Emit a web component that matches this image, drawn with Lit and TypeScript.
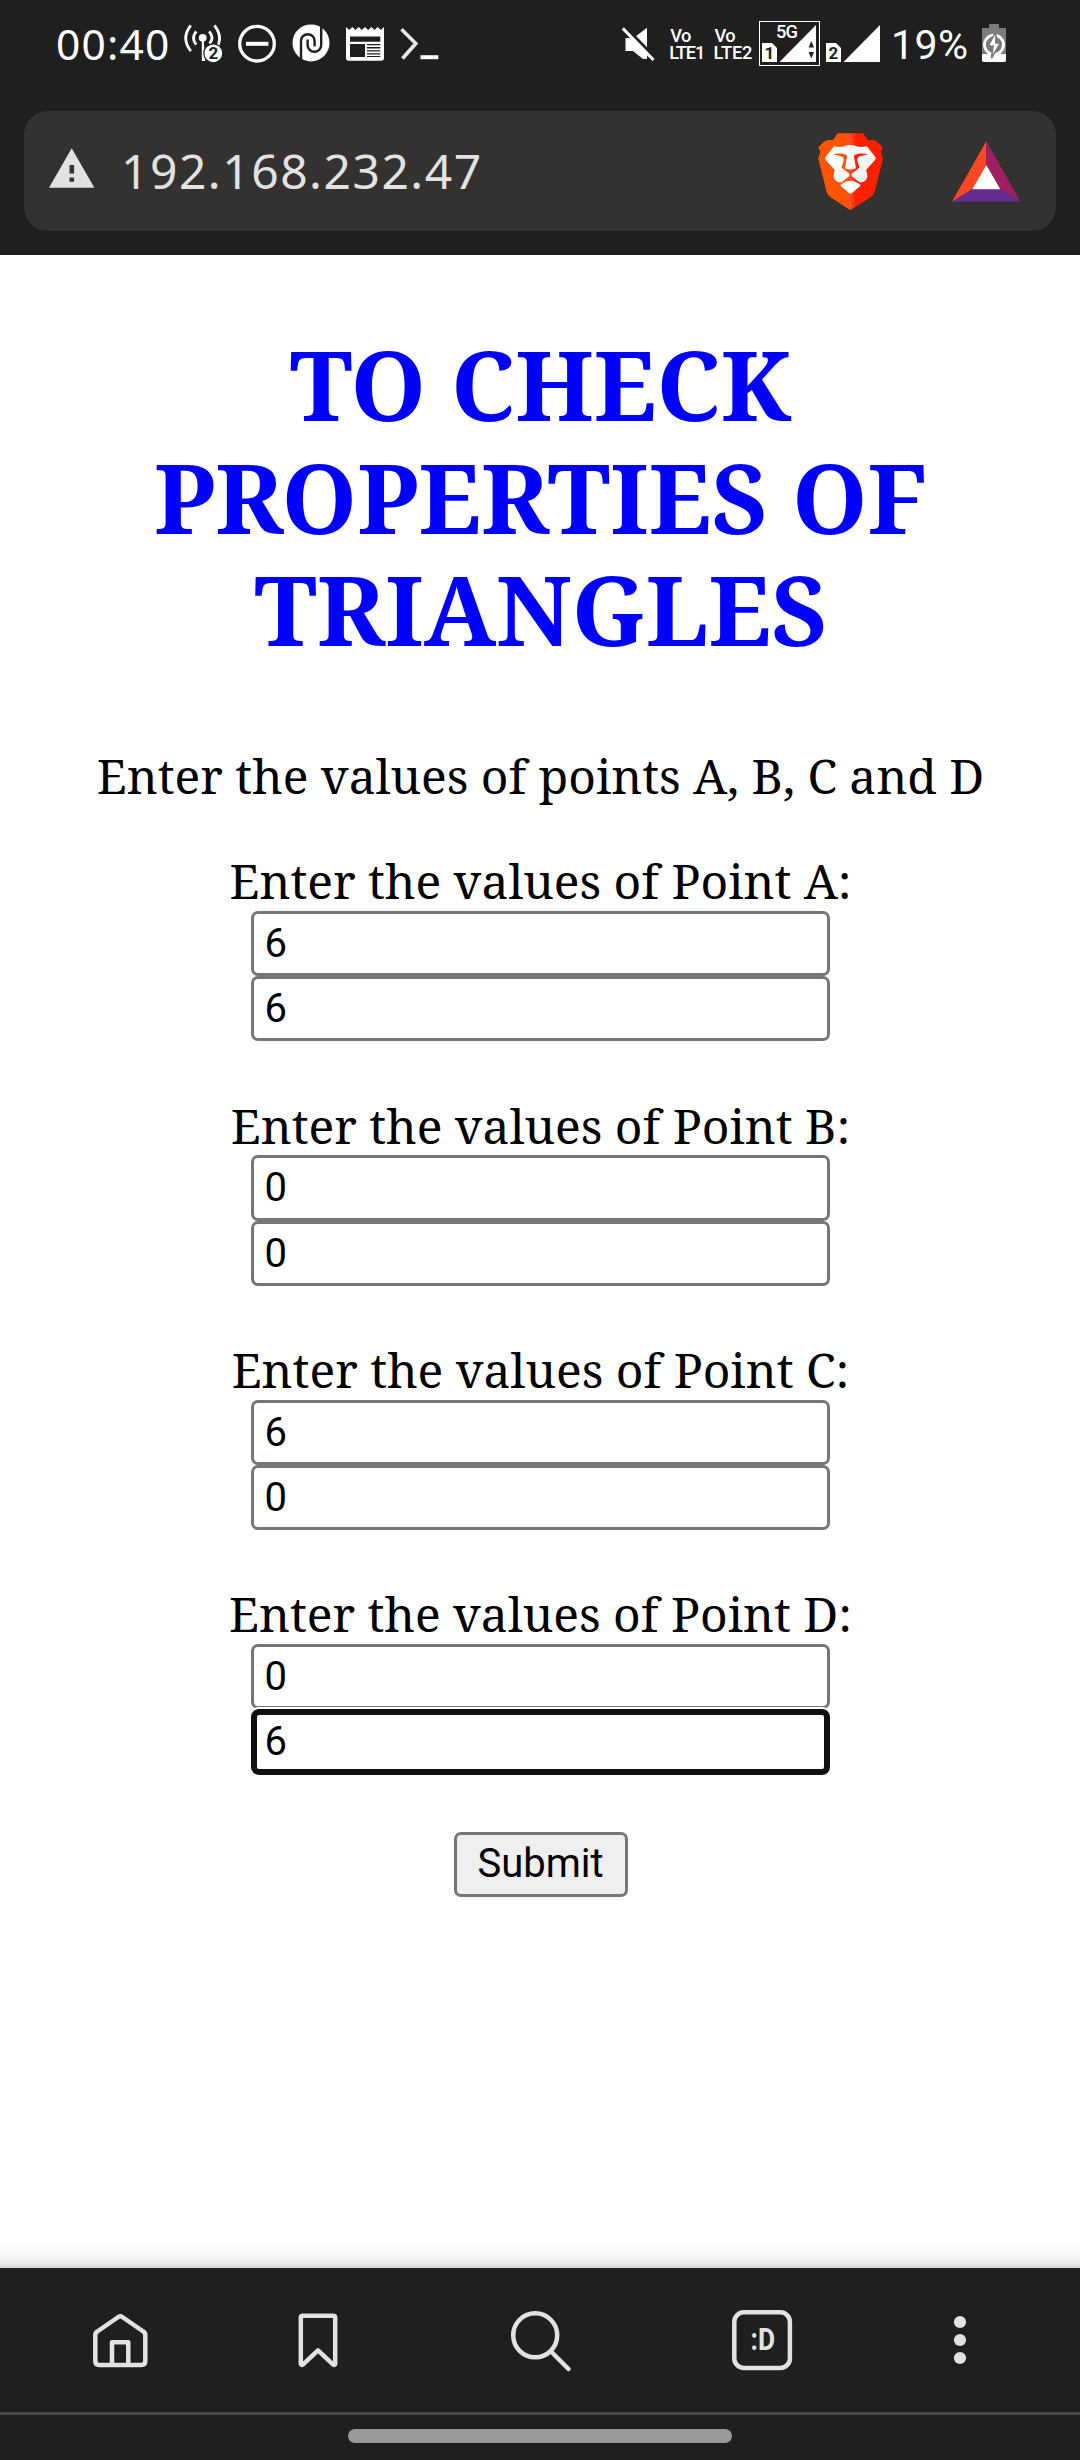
import { LitElement, html, css, svg } from "lit";
import { customElement, property } from "lit/decorators.js";
import { classMap } from "lit/directives/class-map.js";

@customElement("status-bar")
class StatusBar extends LitElement {
  static styles = css`
    :host { display: block; height: 87px; background: #1f1f1f; }
    .bar { display: flex; justify-content: space-between; height: 87px; padding: 0 72px 0 56px; }
    .side { display: flex; }
    .clock, .percent { color: #fff; font: 42px/87px "Noto Sans", sans-serif; white-space: nowrap; }
    .clock { width: 124px; font-size: 42.5px; letter-spacing: 1.2px; height: 87px; }
    .percent { font-family: Roboto, sans-serif; font-size: 41px; padding-top: 2px; width: 88px; letter-spacing: 0.5px; }
    svg { display: block; height: 87px; }
    .small { font: 500 18.3px Roboto, sans-serif; fill: #fff; }
    .sim { font: 700 17px Roboto, sans-serif; fill: #1f1f1f; }
  `;
  render() {
    return html`
      <div class="bar">
        <div class="side">
          <span class="clock">00:40</span>
          <svg width="264" viewBox="180 0 264 87" fill="none" stroke="#fff">
            <g stroke-width="2.8">
              <path d="M190.8 25.3Q180.6 38 190.8 51.2M214.4 25.3Q224.6 38 214.6 51" />
              <path d="M196.2 31.4Q190.8 38 196.2 44.6M209.2 31.4Q214.6 38 209.6 43.6" />
            </g>
            <circle cx="202.7" cy="37.8" r="3.9" fill="#fff" stroke="none" />
            <path d="M201.8 40h1.9l1.6 21h-3.5z" fill="#fff" stroke="none" />
            <circle cx="213.3" cy="53.3" r="9.5" fill="#fff" stroke="#1f1f1f" stroke-width="1.2" />
            <text class="sim" x="213.3" y="59.3" text-anchor="middle" stroke="none">2</text>
            <circle cx="257" cy="43.7" r="17.3" stroke-width="3.3" />
            <path d="M246 43.8h22.4" stroke-width="4" />
            <circle cx="311" cy="42.9" r="18.5" fill="#fff" stroke="none" />
            <path d="M301 62V41a6.8 6.8 0 0 1 13.6 0v5.5M321.2 24V45a6.8 6.8 0 0 1-13.6 0v-5.5" stroke="#1f1f1f" stroke-width="2.4" />
            <path d="M346 27l3.2 3 3.1-3 3.2 3 3.2-3 3.1 3 3.2-3 3.2 3 3.1-3 3.2 3 3.2-3 3.1 3 3.2-3v31a2.8 2.8 0 0 1-2.8 2.8H348.8a2.8 2.8 0 0 1-2.8-2.8z" fill="#fff" stroke="none" />
            <path d="M350 36.6h30.3v5.2H350zM350 44h15v13h-15zM367 44h13.3v1.2H367zM367 47h13.3v1.4H367zM367 50.2h13.3v1.4H367zM367 53.2h13.3v1.3H367zM367 56h13.3v1H367z" fill="#1f1f1f" stroke="none" />
            <path d="M401.5 29.3L415.8 43.5L402.5 58.5" stroke="#e8e8e8" stroke-width="3.6" />
            <path d="M420.5 57.2h17.8" stroke-width="4" />
          </svg>
        </div>
        <div class="side">
          <svg width="271" viewBox="620 0 271 87" fill="#fff">
            <path d="M625.5 38h8L647 27.8V58.5L633.5 51H625.5z" />
            <path d="M624.6 26.4L655.6 58.4" stroke="#1f1f1f" stroke-width="3" />
            <path d="M633 51L643 59h4v-2L634 44z" />
            <path d="M622.8 28.4L653.5 60" stroke="#fff" stroke-width="3" />
            <text class="small" x="670.3" y="41.7" textLength="21">Vo</text>
            <text class="small" x="669.3" y="59" textLength="36">LTE1</text>
            <text class="small" x="714.5" y="42" textLength="21">Vo</text>
            <text class="small" x="713.5" y="59" textLength="39">LTE2</text>
            <rect x="759.5" y="21.5" width="60" height="44" fill="none" stroke="#fff" />
            <text class="small" x="776" y="38" textLength="22">5G</text>
            <path d="M762 43h10l5 5v14h-15z" />
            <text class="sim" x="769.3" y="58.7" text-anchor="middle">1</text>
            <path d="M779.5 62L816 25v37z" />
            <path d="M811.3 41l2.7 6.5h-5.4zM811.3 58.5l2.7-6.5h-5.4z" fill="#1f1f1f" />
            <path d="M826 43h10l5 5v14h-15z" />
            <text class="sim" x="833.5" y="58.7" text-anchor="middle">2</text>
            <path d="M843.5 62L880 25v37z" />
          </svg>
          <span class="percent">19%</span>
          <svg width="29" viewBox="979 0 29 87">
            <path d="M989 24h10v4h7v32a2 2 0 0 1-2 2h-20a2 2 0 0 1-2-2V28h7z" fill="#7b7b7b" />
            <path d="M982 54h24v6a2 2 0 0 1-2 2h-20a2 2 0 0 1-2-2z" fill="#fff" />
            <circle cx="994" cy="44.7" r="9.5" fill="none" stroke="#fff" stroke-width="2.8" />
            <path d="M996 31.5L988 46h5l-1.5 12L1000.5 43h-4.7z" fill="#fff" stroke="#7b7b7b" stroke-width="1.6" />
          </svg>
        </div>
      </div>
    `;
  }
}

@customElement("address-bar")
class AddressBar extends LitElement {
  static styles = css`
    :host { display: block; background: #1f1f1f; padding: 24px 24px; }
    .pill { display: flex; align-items: center; height: 120px; border-radius: 24px; background: #333230; padding: 0 36px 0 25px; }
    .warn { margin: 0 26px 6px 0; }
    .url { flex: 1; color: #e2e2e2; font: 48px/66px "Noto Sans", sans-serif; letter-spacing: 1.5px; }
    .bat { margin-left: 68px; }
  `;
  render() {
    return html`
      <div class="pill">
        <svg class="warn" width="46" height="40" viewBox="0 0 46 40">
          <path d="M22.7 0.3L45.4 39.7H0z" fill="#e2e2e2" />
          <path d="M20.5 17h4.6v8.4h-4.6zM20.5 29.6h4.6v4.2h-4.6z" fill="#333230" />
        </svg>
        <span class="url">192.168.232.47</span>
        <svg width="65.3" height="77" viewBox="115 97 196 231">
          <defs>
            <linearGradient id="mane" gradientUnits="userSpaceOnUse" x1="116" x2="310" y1="0" y2="0">
              <stop offset="0" stop-color="#ff5500" />
              <stop offset="0.41" stop-color="#ff5500" />
              <stop offset="0.5" stop-color="#ff4b2a" />
              <stop offset="0.582" stop-color="#ff2000" />
              <stop offset="1" stop-color="#ff2000" />
            </linearGradient>
            <linearGradient id="fur" x1="0" x2="1" y1="0" y2="0.3">
              <stop offset="0.5" stop-color="#fff" />
              <stop offset="1" stop-color="#f0f0f0" />
            </linearGradient>
          </defs>
          <path fill="url(#mane)" d="M175 98H250L266 119Q284 114 293 124L309 140L303 154L310 174L285 274Q282 283 274 289L216 326Q212 329 208 326L153 290Q144 283 141 274L116 174L122 154L116 140L132 124Q141 115 159 119Z" />
          <path fill="url(#fur)" d="M163 137Q178 141 195 137Q205 132 212 133Q219 132 230 137Q246 141 262 137L287 169Q290 173 286 178L260 207Q259 210 261 214Q267 229 257 240Q247 248 237 243L215 225Q212 222 210 225L188 243Q178 248 168 240Q158 229 164 214Q166 210 165 207L138 178Q135 173 138 169Z" />
          <path fill="url(#mane)" d="M160 161Q180 156 199 162Q203 164 202 169L196 203Q212 210 229 203L223 169Q222 164 226 162Q245 156 265 161L241 167Q232 170 233 180L239 198Q239 201 237 203L216 219V226H209V219L188 203Q185 201 186 198L192 180Q193 170 184 167Z" />
          <path fill="#fff" d="M183 252Q212 228 242 252Q244 254 241 257L217 277Q212 281 208 277L184 257Q181 254 183 252Z" />
        </svg>
        <svg class="bat" width="68.3" height="61" viewBox="515 120 205 183">
          <path d="M618 120V192L576 265L515 302Z" fill="#ff4724" />
          <path d="M618 120L720 302L660 265L618 192Z" fill="#9e1f63" />
          <path d="M576 265H660L720 302H515Z" fill="#662d91" />
          <path d="M618 192L660 265H576Z" fill="#fff" />
        </svg>
      </div>
    `;
  }
}

@customElement("point-group")
class PointGroup extends LitElement {
  @property() name = "";
  @property({ attribute: false }) values: string[] = [];
  @property({ type: Number }) active = -1;
  static styles = css`
    :host { display: flex; flex-direction: column; align-items: center; width: 100%; height: 244.4px; }
    .label { box-sizing: border-box; height: 58.6px; padding-top: 0.8px; font: 48px/56px "Noto Serif", serif; white-space: nowrap; }
    .field {
      box-sizing: border-box; width: 579px; height: 65.2px; margin: 0; padding: 0 10.5px; flex: none;
      border: 3px solid #767676; border-radius: 7px; background: #fff; color: #000; outline: none;
      font: 40px/50px Roboto, sans-serif; appearance: none;
    }
    .focused { position: relative; border: 6px solid #101010; border-radius: 8px; padding: 0 7.5px; box-shadow: 0 0 0 2px #fff; }
  `;
  render() {
    return html`
      <label class="label">Enter the values of Point ${this.name}:</label>
      ${this.values.map((v, i) => html`
        <input class=${classMap({ field: true, focused: i === this.active })} type="text" .value=${v} />
      `)}
    `;
  }
}

const icons = [
  { w: 72, box: "84 2304 72 72", art: svg`
    <path d="M97.3 2331.500q-2 1.200-2 3.500v26q0 4 4 4h42q4 0 4-4v-26q0-2.300-2-3.500l-21-14.500q-2-1.400-4 0z" />
    <path d="M112 2364.500v-22.300h16.300v22.300" />` },
  { w: 72, box: "282 2304 72 72", art: svg`
    <path d="M300.800 2318q0-2.200 2.200-2.200h30q2.200 0 2.200 2.200v46q-.6 1.500-2 .6l-15.200-14.200-15.200 14.200q-1.400.9-2-.6z" />` },
  { w: 120, box: "480 2304 120 72", art: svg`
    <circle cx="535.2" cy="2335.3" r="22" />
    <path d="M551 2351.500l17.500 17.500" stroke-linecap="round" />` },
  { w: 72, box: "726 2304 72 72", art: svg`
    <rect x="734.3" y="2312.3" width="55.6" height="55.6" rx="9.5" />
    <text class="count" x="750.5" y="2350" textLength="24.5" lengthAdjust="spacingAndGlyphs">:D</text>` },
  { w: 72, box: "924 2304 72 72", art: svg`
    <g fill="#e2e2e2" stroke="none">
      <circle cx="960" cy="2322" r="6.1" /><circle cx="960" cy="2340" r="6.1" /><circle cx="960" cy="2358" r="6.1" />
    </g>` },
];

@customElement("bottom-nav")
class BottomNav extends LitElement {
  static styles = css`
    :host { display: block; height: 192px; background: #1f1f1f; }
    .row { display: flex; justify-content: space-between; align-items: center; height: 144px; padding: 0 84px; }
    .count { font: 700 31px Roboto, sans-serif; fill: #e2e2e2; stroke: none; }
    .gesture { display: flex; justify-content: center; height: 31px; padding-top: 14px; border-top: 3px solid #454745; }
    .handle { width: 384px; height: 14px; border-radius: 7px; background: #999; }
  `;
  render() {
    return html`
      <div class="row">
        ${icons.map((i) => html`
          <svg width=${i.w} height="72" viewBox=${i.box} fill="none" stroke="#e2e2e2" stroke-width="4.5" stroke-linejoin="round">${i.art}</svg>
        `)}
      </div>
      <div class="gesture"><div class="handle"></div></div>
    `;
  }
}

@customElement("app-root")
class AppRoot extends LitElement {
  static styles = css`
    :host { display: flex; flex-direction: column; width: 1080px; height: 2460px; background: #fff; color: #000; overflow: hidden; }
    .page { flex: 1; display: flex; flex-direction: column; align-items: center; padding: 73px 0 0 1px; box-sizing: border-box; min-height: 0; }
    .title { margin: 0 0 82px; width: 900px; text-align: center; color: #00f; font: 700 96px/112.6px "Noto Serif", serif; }
    .intro { margin: 0 0 48.6px; font: 48px/56px "Noto Serif", serif; white-space: nowrap; }
    .submit {
      box-sizing: border-box; width: 174px; height: 65px; margin-top: 2px; padding: 0; border: 3px solid #767676; border-radius: 7px;
      background: #efefef; color: #000; font: 40px/50px Roboto, sans-serif;
    }
    .fade { width: 1080px; height: 26px; margin-top: auto; margin-left: -1px; background: linear-gradient(#fff, #f8f8f8 50%, #ececec 80%, #d6d8d6); }
  `;
  private points = [
    { name: "A", values: ["6", "6"], active: -1 },
    { name: "B", values: ["0", "0"], active: -1 },
    { name: "C", values: ["6", "0"], active: -1 },
    { name: "D", values: ["0", "6"], active: 1 },
  ];
  render() {
    return html`
      <status-bar></status-bar>
      <address-bar></address-bar>
      <main class="page">
        <h1 class="title">TO CHECK PROPERTIES OF TRIANGLES</h1>
        <p class="intro">Enter the values of points A, B, C and D</p>
        ${this.points.map((p) => html`<point-group .name=${p.name} .values=${p.values} .active=${p.active}></point-group>`)}
        <button class="submit">Submit</button>
        <div class="fade"></div>
      </main>
      <bottom-nav></bottom-nav>
    `;
  }
}
